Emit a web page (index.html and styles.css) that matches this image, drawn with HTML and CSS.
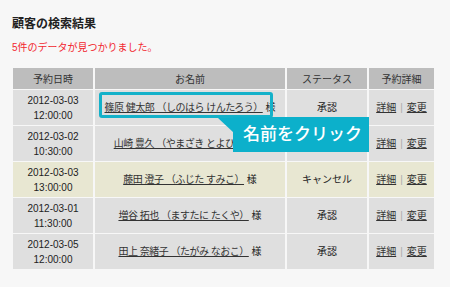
FILE: index.html
```
<!DOCTYPE html>
<html lang="ja">

<head>
    <meta charset="UTF-8">
    <meta name="viewport" content="width=device-width, initial-scale=1.0">
    <title>顧客の検索結果</title>
    <link rel="stylesheet" href="styles.css">
</head>

<body>
    <h2 class="title">顧客の検索結果</h2>
    <p class="notice">5件のデータが見つかりました。</p>

    <div class="result">
        <table class="customers">
            <tr>
                <th class="col-date">予約日時</th>
                <th class="col-name">お名前</th>
                <th class="col-status">ステータス</th>
                <th class="col-detail">予約詳細</th>
            </tr>
            <tr>
                <td>2012-03-03<br>12:00:00</td>
                <td><a class="name" href="#">篠原 健太郎 （しのはら けんたろう）</a> 様</td>
                <td>承認</td>
                <td><a href="#">詳細</a><span class="sep">|</span><a href="#">変更</a></td>
            </tr>
            <tr>
                <td>2012-03-02<br>10:30:00</td>
                <td><a class="name" href="#">山崎 豊久 （やまざき とよひさ）</a> 様</td>
                <td>承認</td>
                <td><a href="#">詳細</a><span class="sep">|</span><a href="#">変更</a></td>
            </tr>
            <tr class="cancel">
                <td>2012-03-03<br>13:00:00</td>
                <td><a class="name" href="#">藤田 澄子 （ふじた すみこ）</a> 様</td>
                <td>キャンセル</td>
                <td><a href="#">詳細</a><span class="sep">|</span><a href="#">変更</a></td>
            </tr>
            <tr>
                <td>2012-03-01<br>11:30:00</td>
                <td><a class="name" href="#">増谷 拓也 （ますたに たくや）</a> 様</td>
                <td>承認</td>
                <td><a href="#">詳細</a><span class="sep">|</span><a href="#">変更</a></td>
            </tr>
            <tr>
                <td>2012-03-05<br>12:00:00</td>
                <td><a class="name" href="#">田上 奈緒子 （たがみ なおこ）</a> 様</td>
                <td>承認</td>
                <td><a href="#">詳細</a><span class="sep">|</span><a href="#">変更</a></td>
            </tr>
        </table>

        <!-- 名前リンクの案内 -->
        <div class="hint-box"></div>
        <svg class="hint-arrow" width="16" height="15" viewBox="0 0 16 15">
            <polygon points="0,0 16,0 16,15" fill="#0cb0cb" />
        </svg>
        <div class="hint-label">名前をクリック</div>
    </div>
</body>

</html>
```

FILE: styles.css
```
body {
    margin: 0;
    padding: 17px 12px 0 11px;
    background-color: #f7f7f7;
    color: #333;
    font-family: "Liberation Sans", "Noto Sans CJK JP", sans-serif;
    font-size: 10px;
}

.title {
    margin: 0 0 0 1px;
    font-size: 12px;
    font-weight: bold;
    line-height: 14px;
    color: #222;
}

.notice {
    margin: 10px 0 12px 1px;
    line-height: 14px;
    color: #f2262e;
}

.result {
    position: relative;
}

.customers {
    border-collapse: separate;
    border-spacing: 2px 1px;
    width: 425px;
}

.customers th {
    height: 21px;
    padding: 0;
    background-color: #bdbdbd;
    font-weight: normal;
    color: #333;
}

.customers td {
    height: 35px;
    padding: 0;
    background-color: #dfdfdf;
    text-align: center;
    line-height: 15px;
    color: #222;
}

.customers tr.cancel td {
    background-color: #e8e7d2;
}

.col-date {
    width: 80px;
}

.col-name {
    width: 190px;
}

.col-status {
    width: 80px;
}

.customers a {
    color: #333;
    text-decoration: underline;
}

.customers a.name {
    letter-spacing: -0.5px;
}

.sep {
    margin: 0 4px;
    color: #aaa;
}

.hint-box {
    position: absolute;
    left: 88px;
    top: 25px;
    width: 168px;
    height: 20px;
    border: 3px solid #14b1c9;
    border-radius: 3px;
}

.hint-arrow {
    position: absolute;
    left: 207px;
    top: 51px;
}

.hint-label {
    position: absolute;
    left: 222px;
    top: 50px;
    width: 126px;
    height: 35px;
    padding-left: 10px;
    background-color: #0cb0cb;
    color: #fff;
    font-size: 17px;
    font-weight: 500;
    line-height: 35px;
}
```
